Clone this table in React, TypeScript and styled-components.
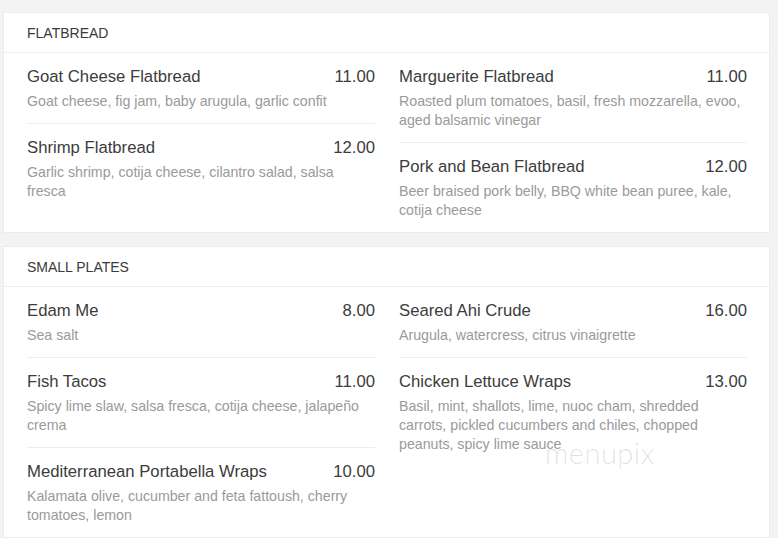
import React from "react";
import styled, { createGlobalStyle } from "styled-components";

const GlobalStyle = createGlobalStyle`
  html, body {
    margin: 0;
    padding: 0;
    background: #f3f3f5;
    font-family: "Liberation Sans", Arial, sans-serif;
  }
`;

const Page = styled.div`
  position: relative;
  width: 778px;
  height: 538px;
  overflow: hidden;
  padding: 12px 0 0 3px;
  box-sizing: border-box;
  display: flex;
  flex-direction: column;
  gap: 13px;
`;

const Card = styled.section`
  width: 767px;
  background: #ffffff;
  border: 1px solid #ececef;
  box-sizing: border-box;
`;

const CardHeader = styled.h2`
  margin: 0;
  height: 40px;
  padding: 1px 23px 0;
  box-sizing: border-box;
  display: flex;
  align-items: center;
  font-size: 14px;
  font-weight: 400;
  color: #3a3a3a;
  text-transform: uppercase;
  border-bottom: 1px solid #efeff1;
`;

const Columns = styled.div`
  display: grid;
  grid-template-columns: 348px 348px;
  column-gap: 24px;
  padding: 0 23px;
`;

const Column = styled.div`
  display: flex;
  flex-direction: column;
`;

const Item = styled.div`
  padding: 13px 0 12px;
  border-bottom: 1px solid #ededed;
  &:last-child {
    border-bottom: none;
  }
`;

const TitleRow = styled.div`
  display: flex;
  justify-content: space-between;
  align-items: baseline;
  font-size: 16.7px;
  line-height: 22px;
  color: #3c3c3c;
`;

const Name = styled.span``;
const Price = styled.span``;

const Desc = styled.p`
  margin: 4px 0 0;
  padding-right: 6px;
  font-size: 14.2px;
  line-height: 19px;
  color: #9a9a9a;
`;

const Watermark = styled.div`
  position: absolute;
  left: 545px;
  top: 435px;
  font-family: Lato, "Open Sans", sans-serif;
  font-weight: 300;
  font-size: 29px;
  letter-spacing: 0.5px;
  color: rgba(0, 0, 0, 0.13);
  pointer-events: none;
`;

type MenuItem = { name: string; price: string; desc: string };
type Section = { title: string; left: MenuItem[]; right: MenuItem[] };

const sections: Section[] = [
  {
    title: "Flatbread",
    left: [
      { name: "Goat Cheese Flatbread", price: "11.00", desc: "Goat cheese, fig jam, baby arugula, garlic confit" },
      { name: "Shrimp Flatbread", price: "12.00", desc: "Garlic shrimp, cotija cheese, cilantro salad, salsa fresca" },
    ],
    right: [
      { name: "Marguerite Flatbread", price: "11.00", desc: "Roasted plum tomatoes, basil, fresh mozzarella, evoo, aged balsamic vinegar" },
      { name: "Pork and Bean Flatbread", price: "12.00", desc: "Beer braised pork belly, BBQ white bean puree, kale, cotija cheese" },
    ],
  },
  {
    title: "Small Plates",
    left: [
      { name: "Edam Me", price: "8.00", desc: "Sea salt" },
      { name: "Fish Tacos", price: "11.00", desc: "Spicy lime slaw, salsa fresca, cotija cheese, jalapeño crema" },
      { name: "Mediterranean Portabella Wraps", price: "10.00", desc: "Kalamata olive, cucumber and feta fattoush, cherry tomatoes, lemon" },
    ],
    right: [
      { name: "Seared Ahi Crude", price: "16.00", desc: "Arugula, watercress, citrus vinaigrette" },
      { name: "Chicken Lettuce Wraps", price: "13.00", desc: "Basil, mint, shallots, lime, nuoc cham, shredded carrots, pickled cucumbers and chiles, chopped peanuts, spicy lime sauce" },
    ],
  },
];

const ItemView = ({ item }: { item: MenuItem }) => (
  <Item>
    <TitleRow>
      <Name>{item.name}</Name>
      <Price>{item.price}</Price>
    </TitleRow>
    <Desc>{item.desc}</Desc>
  </Item>
);

export default function App() {
  return (
    <Page>
      <GlobalStyle />
      {sections.map((s) => (
        <Card key={s.title}>
          <CardHeader>{s.title}</CardHeader>
          <Columns>
            <Column>
              {s.left.map((it) => (
                <ItemView key={it.name} item={it} />
              ))}
            </Column>
            <Column>
              {s.right.map((it) => (
                <ItemView key={it.name} item={it} />
              ))}
            </Column>
          </Columns>
        </Card>
      ))}
      <Watermark>menupix</Watermark>
    </Page>
  );
}
